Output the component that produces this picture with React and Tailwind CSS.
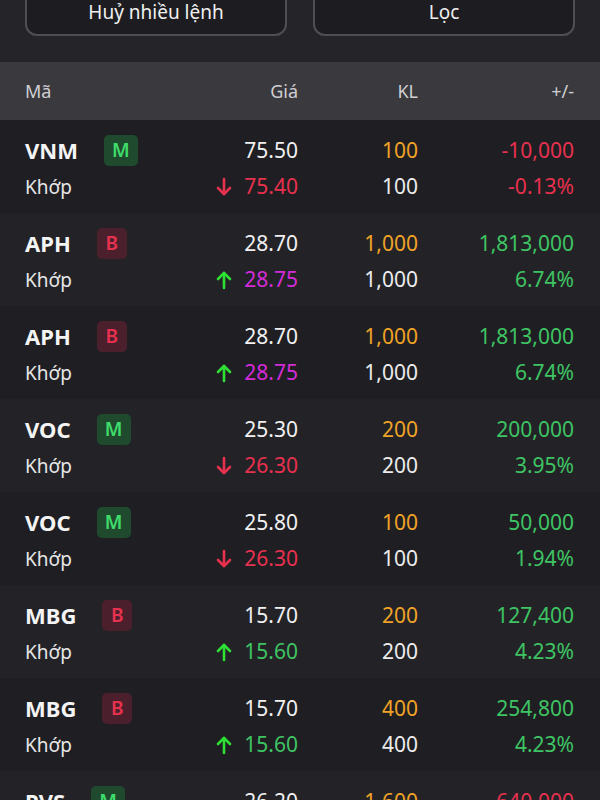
import React from "react";

const rows = [
  { t: "VNM", b: "M", p: "75.50", dir: "down", p2: "75.40", p2c: "text-[#e8304f]", kl: "100", ch: "-10,000", pct: "-0.13%", cc: "text-[#e8304f]" },
  { t: "APH", b: "B", p: "28.70", dir: "up", p2: "28.75", p2c: "text-[#d42bd8]", kl: "1,000", ch: "1,813,000", pct: "6.74%", cc: "text-[#3ec463]" },
  { t: "APH", b: "B", p: "28.70", dir: "up", p2: "28.75", p2c: "text-[#d42bd8]", kl: "1,000", ch: "1,813,000", pct: "6.74%", cc: "text-[#3ec463]" },
  { t: "VOC", b: "M", p: "25.30", dir: "down", p2: "26.30", p2c: "text-[#e8304f]", kl: "200", ch: "200,000", pct: "3.95%", cc: "text-[#3ec463]" },
  { t: "VOC", b: "M", p: "25.80", dir: "down", p2: "26.30", p2c: "text-[#e8304f]", kl: "100", ch: "50,000", pct: "1.94%", cc: "text-[#3ec463]" },
  { t: "MBG", b: "B", p: "15.70", dir: "up", p2: "15.60", p2c: "text-[#3ec463]", kl: "200", ch: "127,400", pct: "4.23%", cc: "text-[#3ec463]" },
  { t: "MBG", b: "B", p: "15.70", dir: "up", p2: "15.60", p2c: "text-[#3ec463]", kl: "400", ch: "254,800", pct: "4.23%", cc: "text-[#3ec463]" },
  { t: "PVS", b: "M", p: "26.20", dir: "down", p2: "26.30", p2c: "text-[#e8304f]", kl: "1,600", ch: "-640,000", pct: "-2.00%", cc: "text-[#e8304f]" },
];

function Arrow({ dir }) {
  if (dir === "up") {
    return (
      <svg width="16" height="20" viewBox="0 0 16 20" fill="none" stroke="#2fe034" strokeWidth="2.6" strokeLinecap="round" strokeLinejoin="round">
        <path d="M8 18V3" />
        <path d="M2 9l6-6 6 6" />
      </svg>
    );
  }
  return (
    <svg width="16" height="20" viewBox="0 0 16 20" fill="none" stroke="#e8304f" strokeWidth="2.6" strokeLinecap="round" strokeLinejoin="round">
      <path d="M8 2v15" />
      <path d="M2 11l6 6 6-6" />
    </svg>
  );
}

function Badge({ b }) {
  if (b === "M") {
    return (
      <div className="w-[34px] h-[31px] rounded-[5px] bg-[#1f4a2e] flex items-center justify-center text-[#3fdc6b] text-[19px] font-semibold">
        M
      </div>
    );
  }
  return (
    <div className="w-[30px] h-[31px] rounded-[5px] bg-[#4b1f2c] flex items-center justify-center text-[#e6314f] text-[19px] font-semibold">
      B
    </div>
  );
}

export default function App() {
  return (
    <div className="w-[600px] h-[800px] overflow-hidden bg-[#1f1f23] text-[#eeeeee]" style={{ fontFamily: '"Noto Sans", "Open Sans", sans-serif' }}>
      <div className="bg-[#252529] h-[62px] overflow-hidden">
        <div className="-mt-[12px] flex gap-[26px] pl-[25px] pr-[25px]">
          <div className="w-[262px] h-[48px] rounded-[12px] border-2 border-[#4e4e54] bg-[#1d1d21] flex items-center justify-center text-[19px] text-[#efefef]">
            Huỷ nhiều lệnh
          </div>
          <div className="flex-1 h-[48px] rounded-[12px] border-2 border-[#4e4e54] bg-[#1d1d21] flex items-center justify-center text-[19px] text-[#efefef]">
            Lọc
          </div>
        </div>
      </div>
      <div className="h-[58px] bg-[#3a3a3e] grid grid-cols-[150px_123px_120px_156px] items-center pl-[25px] pr-[26px] text-[18px] text-[#cfcfd3]">
        <div>Mã</div>
        <div className="text-right">Giá</div>
        <div className="text-right">KL</div>
        <div className="text-right">+/-</div>
      </div>
      {rows.map((r, i) => (
        <div key={i} className={`h-[93px] pt-[14px] pl-[25px] pr-[26px] ${i % 2 === 0 ? "bg-[#1f1f23]" : "bg-[#232327]"}`}>
          <div className="grid grid-cols-[150px_123px_120px_156px] h-[30px] items-center text-[21px]">
            <div className="flex items-center gap-[26px]">
              <span className="font-bold text-[22px] text-[#f4f4f4]">{r.t}</span>
              <Badge b={r.b} />
            </div>
            <div className="text-right text-[#f0f0f0]">{r.p}</div>
            <div className="text-right text-[#f0a326]">{r.kl}</div>
            <div className={`text-right ${r.cc}`}>{r.ch}</div>
          </div>
          <div className="grid grid-cols-[150px_123px_120px_156px] h-[30px] mt-[7px] items-center text-[21px]">
            <div className="text-[19px] text-[#e6e6e6]">Khớp</div>
            <div className="flex items-center justify-end gap-[12px]">
              <Arrow dir={r.dir} />
              <span className={r.p2c}>{r.p2}</span>
            </div>
            <div className="text-right text-[#ececec]">{r.kl}</div>
            <div className={`text-right ${r.cc}`}>{r.pct}</div>
          </div>
        </div>
      ))}
    </div>
  );
}
